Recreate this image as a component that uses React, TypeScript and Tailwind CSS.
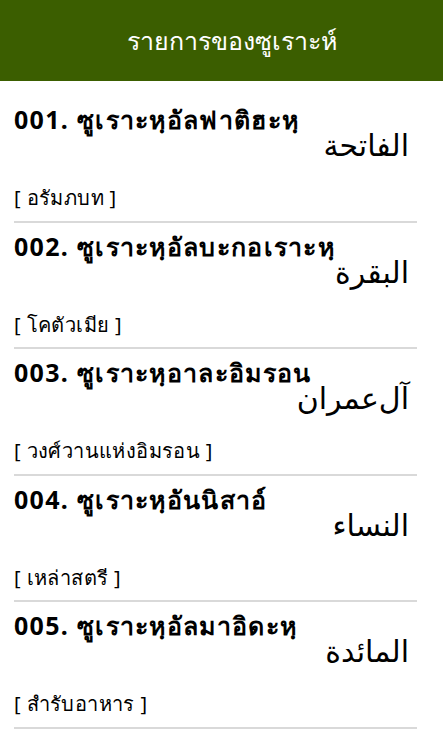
import React from "react";

const items = [
  { t: "001. ซูเราะหฺอัลฟาติฮะหฺ", a: "الفاتحة", s: "[ อรัมภบท ]" },
  { t: "002. ซูเราะหฺอัลบะกอเราะหฺ", a: "البقرة", s: "[ โคตัวเมีย ]" },
  { t: "003. ซูเราะหฺอาละอิมรอน", a: "آل‌عمران", s: "[ วงศ์วานแห่งอิมรอน ]" },
  { t: "004. ซูเราะหฺอันนิสาอ์", a: "النساء", s: "[ เหล่าสตรี ]" },
  { t: "005. ซูเราะหฺอัลมาอิดะหฺ", a: "المائدة", s: "[ สำรับอาหาร ]" },
];

export default function App() {
  return (
    <div className="w-[443px] h-[738px] overflow-hidden bg-white" style={{ fontFamily: '"Noto Sans", "DejaVu Sans", sans-serif' }}>
      <div className="h-[81px] bg-[#3b5e00] flex items-center justify-center pl-[20px]">
        <span className="text-white text-[25px]">รายการของซูเราะห์</span>
      </div>
      <div className="pt-[15px]">
        {items.map((it, i) => (
          <div key={i} className="ml-[14px] mr-[26px] border-b-2 border-[#d9d9d9] h-[126.5px] pt-[7px] relative">
            <div className="text-[25px] font-bold text-black leading-[32px] tracking-[1.3px]">{it.t}</div>
            <div dir="rtl" className="text-right pr-[8px] text-[30px] leading-[40px] -mt-[10px] text-black">{it.a}</div>
            <div className="text-[20px] text-black leading-[28px] mt-[19px] tracking-[0.4px]">{it.s}</div>
          </div>
        ))}
      </div>
    </div>
  );
}
